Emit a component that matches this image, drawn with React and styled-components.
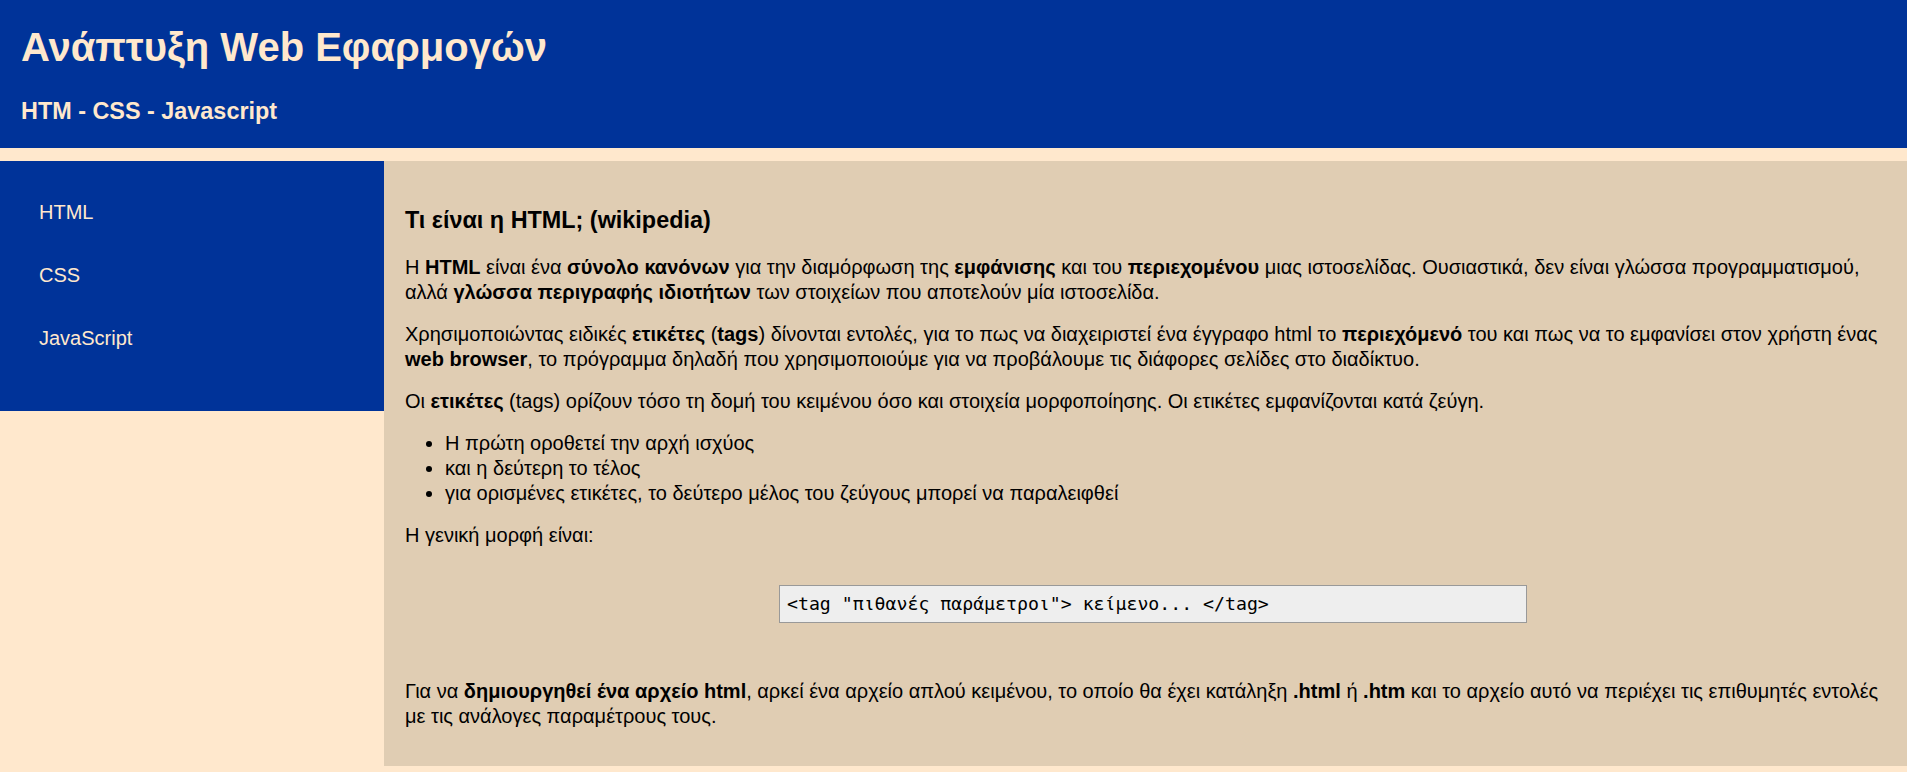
import React from "react";
import styled, { createGlobalStyle } from "styled-components";

const GlobalStyle = createGlobalStyle`
  html, body {
    margin: 0;
    padding: 0;
    background: #ffe8cd;
  }
  body {
    font-family: "Liberation Sans", Arial, sans-serif;
    font-size: 20px;
    color: #000;
  }
`;

const Page = styled.div`
  display: flex;
  flex-direction: column;
`;

const Header = styled.header`
  background: #003399;
  color: #ffe8cd;
  height: 148px;
  box-sizing: border-box;
  padding: 25px 21px 0;
`;

const Title = styled.h1`
  margin: 0;
  font-size: 40px;
  font-weight: bold;
  line-height: normal;
`;

const Subtitle = styled.h3`
  margin: 28px 0 0;
  font-size: 23.4px;
  font-weight: bold;
  line-height: normal;
`;

const Body = styled.div`
  display: flex;
  align-items: flex-start;
  margin-top: 13px;
`;

const Sidebar = styled.nav`
  flex: 0 0 384px;
  background: #003399;
  box-sizing: border-box;
  padding: 20px 0 41px;
`;

const NavList = styled.ul`
  list-style: none;
  margin: 0;
  padding: 0;
`;

const NavLink = styled.a`
  display: block;
  padding: 20px 39px;
  line-height: 23px;
  color: #ffe8cd;
  text-decoration: none;
  font-size: 20px;
`;

const Main = styled.main`
  flex: 1;
  background: #e0cdb3;
  box-sizing: border-box;
  padding: 20px 21px;
  min-height: 605px;
`;

const Heading = styled.h3`
  margin: 25.8px 0 21px;
  font-size: 23.4px;
  font-weight: bold;
  line-height: normal;
`;

const Para = styled.p`
  margin: 17px 0;
  line-height: 25px;
`;

const List = styled.ul`
  margin: 17px 0;
  padding-left: 40px;
  line-height: 25px;
`;

const CodeBox = styled.div`
  margin: 37px 0 56.5px 374px;
  width: 748px;
  box-sizing: border-box;
  background: #eeeeee;
  border: 1px solid #999999;
  padding: 8px 7px;
  font-family: "DejaVu Sans Mono", "Liberation Mono", monospace;
  font-size: 18.2px;
  line-height: 20px;
  white-space: pre;
`;

export default function App() {
  return (
    <>
      <GlobalStyle />
      <Page>
        <Header>
          <Title>Ανάπτυξη Web Εφαρμογών</Title>
          <Subtitle>HTM - CSS - Javascript</Subtitle>
        </Header>
        <Body>
          <Sidebar>
            <NavList>
              <li><NavLink href="#">HTML</NavLink></li>
              <li><NavLink href="#">CSS</NavLink></li>
              <li><NavLink href="#">JavaScript</NavLink></li>
            </NavList>
          </Sidebar>
          <Main>
            <Heading>Τι είναι η HTML; (wikipedia)</Heading>
            <Para>
              Η <b>HTML</b> είναι ένα <b>σύνολο κανόνων</b> για την διαμόρφωση της <b>εμφάνισης</b> και του <b>περιεχομένου</b> μιας ιστοσελίδας. Ουσιαστικά, δεν είναι γλώσσα προγραμματισμού, αλλά <b>γλώσσα περιγραφής ιδιοτήτων</b> των στοιχείων που αποτελούν μία ιστοσελίδα.
            </Para>
            <Para>
              Χρησιμοποιώντας ειδικές <b>ετικέτες</b> (<b>tags</b>) δίνονται εντολές, για το πως να διαχειριστεί ένα έγγραφο html το <b>περιεχόμενό</b> του και πως να το εμφανίσει στον χρήστη ένας <b>web browser</b>, το πρόγραμμα δηλαδή που χρησιμοποιούμε για να προβάλουμε τις διάφορες σελίδες στο διαδίκτυο.
            </Para>
            <Para>
              Οι <b>ετικέτες</b> (tags) ορίζουν τόσο τη δομή του κειμένου όσο και στοιχεία μορφοποίησης. Οι ετικέτες εμφανίζονται κατά ζεύγη.
            </Para>
            <List>
              <li>Η πρώτη οροθετεί την αρχή ισχύος</li>
              <li>και η δεύτερη το τέλος</li>
              <li>για ορισμένες ετικέτες, το δεύτερο μέλος του ζεύγους μπορεί να παραλειφθεί</li>
            </List>
            <Para>Η γενική μορφή είναι:</Para>
            <CodeBox>{'<tag "πιθανές παράμετροι"> κείμενο... </tag>'}</CodeBox>
            <Para>
              Για να <b>δημιουργηθεί ένα αρχείο html</b>, αρκεί ένα αρχείο απλού κειμένου, το οποίο θα έχει κατάληξη <b>.html</b> ή <b>.htm</b> και το αρχείο αυτό να περιέχει τις επιθυμητές εντολές με τις ανάλογες παραμέτρους τους.
            </Para>
          </Main>
        </Body>
      </Page>
    </>
  );
}
